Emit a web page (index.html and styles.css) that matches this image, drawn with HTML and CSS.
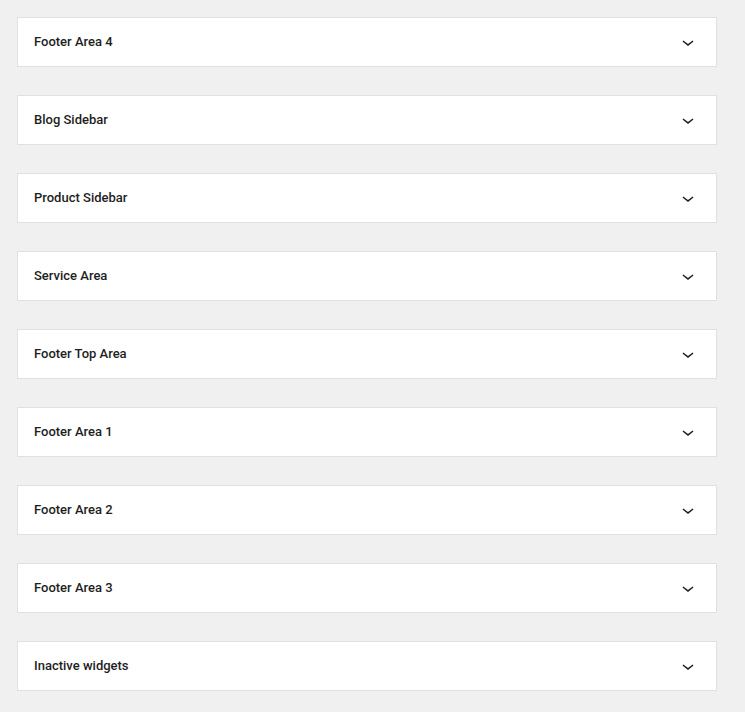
FILE: index.html
```html
<!DOCTYPE html>
<html>
<head>
<meta charset="utf-8">
<link rel="stylesheet" href="styles.css">
</head>
<body>
<div class="list">
  <div class="panel"><span class="title">Footer Area 4</span><svg class="chev" viewBox="0 0 24 24" width="24" height="24"><path d="M17.5 11.6L12 16l-5.5-4.4.9-1.2L12 14l4.6-3.6z"/></svg></div>
  <div class="panel"><span class="title">Blog Sidebar</span><svg class="chev" viewBox="0 0 24 24" width="24" height="24"><path d="M17.5 11.6L12 16l-5.5-4.4.9-1.2L12 14l4.6-3.6z"/></svg></div>
  <div class="panel"><span class="title">Product Sidebar</span><svg class="chev" viewBox="0 0 24 24" width="24" height="24"><path d="M17.5 11.6L12 16l-5.5-4.4.9-1.2L12 14l4.6-3.6z"/></svg></div>
  <div class="panel"><span class="title">Service Area</span><svg class="chev" viewBox="0 0 24 24" width="24" height="24"><path d="M17.5 11.6L12 16l-5.5-4.4.9-1.2L12 14l4.6-3.6z"/></svg></div>
  <div class="panel"><span class="title">Footer Top Area</span><svg class="chev" viewBox="0 0 24 24" width="24" height="24"><path d="M17.5 11.6L12 16l-5.5-4.4.9-1.2L12 14l4.6-3.6z"/></svg></div>
  <div class="panel"><span class="title">Footer Area 1</span><svg class="chev" viewBox="0 0 24 24" width="24" height="24"><path d="M17.5 11.6L12 16l-5.5-4.4.9-1.2L12 14l4.6-3.6z"/></svg></div>
  <div class="panel"><span class="title">Footer Area 2</span><svg class="chev" viewBox="0 0 24 24" width="24" height="24"><path d="M17.5 11.6L12 16l-5.5-4.4.9-1.2L12 14l4.6-3.6z"/></svg></div>
  <div class="panel"><span class="title">Footer Area 3</span><svg class="chev" viewBox="0 0 24 24" width="24" height="24"><path d="M17.5 11.6L12 16l-5.5-4.4.9-1.2L12 14l4.6-3.6z"/></svg></div>
  <div class="panel"><span class="title">Inactive widgets</span><svg class="chev" viewBox="0 0 24 24" width="24" height="24"><path d="M17.5 11.6L12 16l-5.5-4.4.9-1.2L12 14l4.6-3.6z"/></svg></div>
</div>
</body>
</html>
```
FILE: styles.css
```css
html, body {
  margin: 0;
  padding: 0;
  background: #f0f0f0;
}
body {
  padding: 17px;
  font-family: Roboto, "Liberation Sans", sans-serif;
}
.list {
  width: 700px;
  display: flex;
  flex-direction: column;
  gap: 28px;
}
.panel {
  box-sizing: border-box;
  height: 50px;
  background: #fff;
  border: 1px solid #e0e0e0;
  display: flex;
  align-items: center;
  justify-content: space-between;
  padding: 0 16px 1px 16px;
}
.title {
  font-size: 13px;
  font-weight: 500;
  color: #1e1e1e;
}
.chev {
  fill: #1e1e1e;
  display: block;
}
```
